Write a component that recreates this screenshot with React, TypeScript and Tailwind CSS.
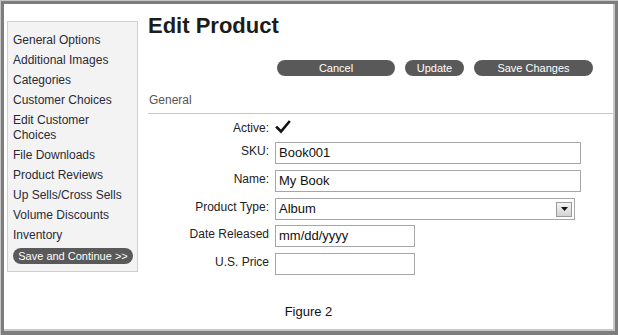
import React from "react";

const font = { fontFamily: '"Liberation Sans", Arial, sans-serif' };

const navItems: string[] = [
  "General Options",
  "Additional Images",
  "Categories",
  "Customer Choices",
  "Edit Customer Choices",
  "File Downloads",
  "Product Reviews",
  "Up Sells/Cross Sells",
  "Volume Discounts",
  "Inventory",
];

function PillButton({ label, w }: { label: string; w: string }) {
  return (
    <div
      className={`${w} h-[16px] rounded-full bg-[#595959] text-white text-[11px] leading-[16px] text-center`}
    >
      {label}
    </div>
  );
}

function Row({
  label,
  mt,
  children,
}: {
  label: string;
  mt: string;
  children: React.ReactNode;
}) {
  return (
    <div className={`flex items-start ${mt}`}>
      <div className="w-[121px] text-right text-[12px] leading-[14px] pt-[2px] text-[#222]">
        {label}
      </div>
      <div className="ml-[6px]">{children}</div>
    </div>
  );
}

function TextBox({ value, w }: { value: string; w: string }) {
  return (
    <div
      className={`${w} h-[22px] border border-[#a6a6a6] bg-white pl-[3px] text-[13px] leading-[20px] text-[#111]`}
    >
      {value}
    </div>
  );
}

export default function App() {
  return (
    <div style={font} className="w-[618px] h-[335px] bg-[#7d7d7d] border-t border-l border-[#c6c6c6] pt-[3px] pl-[3px] pr-[3px] pb-[4px]">
      <div className="w-full h-full bg-white border-r-2 border-b-2 border-[#c8c8c8] flex flex-col">
        <div className="flex pl-[3px]">
          {/* Sidebar */}
          <div className="mt-[17px] w-[131px] h-[251px] bg-[#f3f3f3] border border-[#cfcfcf] pl-[5px] pt-[11px]">
            {navItems.map((t) => (
              <div key={t} className="text-[12px] leading-[15px] mb-[5px] text-[#2a2a38] pr-[10px]">
                {t}
              </div>
            ))}
            <div className="mt-[1px] w-[120px] h-[16px] rounded-full bg-[#595959] text-white text-[11px] leading-[16px] text-center">
              Save and Continue &gt;&gt;
            </div>
          </div>

          {/* Main */}
          <div className="ml-[10px] flex-1">
            <div className="mt-[9px] text-[22px] leading-[26px] font-bold text-[#1c1c1c]">
              Edit Product
            </div>
            <div className="mt-[21px] flex justify-end gap-[10px] pr-[20px]">
              <PillButton label="Cancel" w="w-[118px]" />
              <PillButton label="Update" w="w-[59px]" />
              <PillButton label="Save Changes" w="w-[119px]" />
            </div>
            <div className="mt-[17px] border-b border-[#c8c8c8] pb-[6px] pl-[1px] text-[12px] leading-[14px] text-[#555]">
              General
            </div>

            <Row label="Active:" mt="mt-[5px]">
              <div className="h-[16px] flex items-center">
                <svg width="16" height="14" viewBox="0 0 16 14">
                  <path
                    d="M2 7.5 L6 11.5 L14 2"
                    fill="none"
                    stroke="#111"
                    strokeWidth="2.6"
                    strokeLinecap="square"
                  />
                </svg>
              </div>
            </Row>
            <Row label="SKU:" mt="mt-[7px]">
              <TextBox value="Book001" w="w-[306px]" />
            </Row>
            <Row label="Name:" mt="mt-[6px]">
              <TextBox value="My Book" w="w-[306px]" />
            </Row>
            <Row label="Product Type:" mt="mt-[6px]">
              <div className="w-[300px] h-[22px] border border-[#a6a6a6] bg-white pl-[3px] text-[13px] leading-[20px] text-[#111] flex items-center justify-between pr-[2px]">
                <span>Album</span>
                <div className="w-[16px] h-[15px] border border-[#9a9a9a] bg-gradient-to-b from-[#f4f4f4] to-[#d4d4d4] flex items-center justify-center">
                  <svg width="7" height="4" viewBox="0 0 7 4">
                    <path d="M0 0 L7 0 L3.5 4 Z" fill="#111" />
                  </svg>
                </div>
              </div>
            </Row>
            <Row label="Date Released" mt="mt-[5px]">
              <TextBox value="mm/dd/yyyy" w="w-[140px]" />
            </Row>
            <Row label="U.S. Price" mt="mt-[6px]">
              <TextBox value="" w="w-[140px]" />
            </Row>
          </div>
        </div>
        <div className="mt-[29px] text-center text-[13px] leading-[15px] text-[#111]">
          Figure 2
        </div>
      </div>
    </div>
  );
}
